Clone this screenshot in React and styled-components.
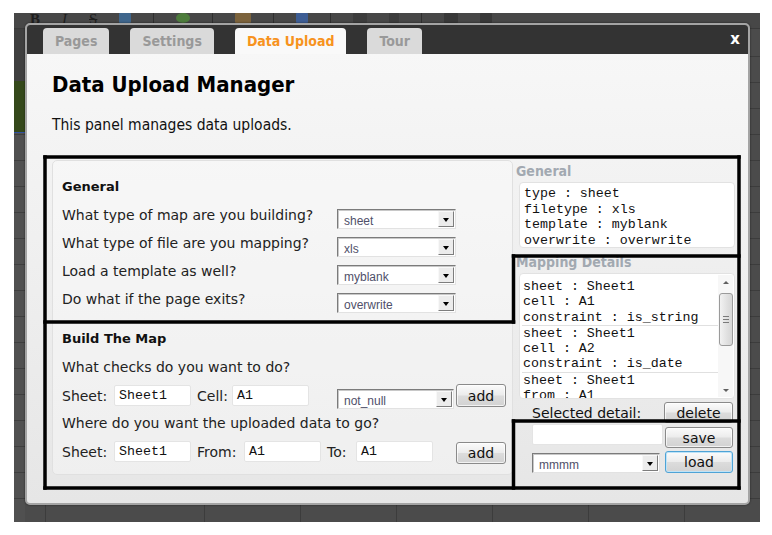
import React from 'react';
import styled, { createGlobalStyle } from 'styled-components';

const GlobalStyle = createGlobalStyle`
  html, body { margin: 0; padding: 0; background: #ffffff; }
  body { font-family: "DejaVu Sans", Verdana, sans-serif; }
  * { box-sizing: border-box; }
`;

const Page = styled.div`
  position: relative;
  width: 772px;
  height: 535px;
  overflow: hidden;
  background: #ffffff;
  padding: 13px 12px 13px 14px;
`;

const Backdrop = styled.div`
  width: 746px;
  height: 509px;
  display: flex;
  flex-direction: column;
  background-color: #4b4b4b;
`;

const Toolbar = styled.div`
  height: 16px;
  flex: none;
  display: flex;
  align-items: flex-start;
  gap: 22px;
  padding: 0 0 0 16px;
  background: #474747;
  border-bottom: 1px solid #3a3a3a;
`;

const ToolGlyph = styled.span`
  font-family: "Liberation Serif", serif;
  font-size: 15px;
  line-height: 13px;
  color: #1e1e1e;
  font-weight: ${p => (p.$bold ? 700 : 400)};
  font-style: ${p => (p.$italic ? 'italic' : 'normal')};
  text-decoration: ${p => (p.$strike ? 'line-through' : 'none')};
`;

const ToolIcon = styled.span`
  width: ${p => p.$w || 12}px;
  height: 10px;
  border-radius: ${p => (p.$round ? '50%' : '1px')};
  background: ${p => p.$c};
  opacity: 0.8;
`;

const ToolSep = styled.span`
  width: 1px;
  height: 10px;
  background: #2f2f2f;
`;

const Sheet = styled.div`
  flex: 1;
  display: flex;
`;

const RowHeader = styled.div`
  width: 11px;
  display: flex;
  flex-direction: column;
  background-color: #505050;
  background-image: repeating-linear-gradient(to bottom, transparent 0 25px, #3e3e3e 25px 26px);
  background-position: 0 2px;
`;

const HeaderTop = styled.div`
  height: 52px;
  background: #3f3f3f;
`;

const GreenCell = styled.div`
  height: 52px;
  background: #34481a;
  border-bottom: 1px solid #3050a0;
`;

const Grid = styled.div`
  flex: 1;
  background-color: #4b4b4b;
  background-image:
    repeating-linear-gradient(to bottom, transparent 0 25px, #3c3c3c 25px 26px),
    repeating-linear-gradient(to right, transparent 0 95px, #3c3c3c 95px 96px);
  background-position: 0 2px, 84px 0;
`;

const Modal = styled.div`
  position: absolute;
  left: 25px;
  top: 23px;
  width: 725px;
  height: 482px;
  border: 2px solid #a4a4a4;
  border-radius: 5px;
  overflow: hidden;
  display: flex;
  flex-direction: column;
  background: linear-gradient(#f8f8f8, #e6e6e6);
  box-shadow: 0 0 2px rgba(0, 0, 0, 0.6);
`;

const Header = styled.div`
  height: 29px;
  flex: none;
  display: flex;
  align-items: flex-end;
  gap: 21px;
  padding-left: 16px;
  background: #333333;
`;

const Tab = styled.div`
  height: 26px;
  padding: 0 12px;
  border-radius: 4px 4px 0 0;
  background: ${p => (p.$active ? '#f9f9f9' : '#dadada')};
  color: ${p => (p.$active ? '#f7931e' : '#999999')};
  font-family: "DejaVu Sans Condensed", "DejaVu Sans", sans-serif;
  font-stretch: condensed;
  font-weight: 700;
  font-size: 14px;
  line-height: 27px;
`;

const Close = styled.div`
  margin-left: auto;
  margin-right: 8px;
  align-self: center;
  color: #ffffff;
  font-family: "DejaVu Sans", sans-serif;
  font-weight: 700;
  font-size: 15px;
  line-height: 16px;
  padding-bottom: 2px;
`;

const Body = styled.div`
  flex: 1;
  padding: 0 13px 0 25px;
  display: flex;
  flex-direction: column;
`;

const Title = styled.h1`
  margin: 18px 0 0;
  font-family: "DejaVu Sans Condensed", "DejaVu Sans", sans-serif;
  font-stretch: condensed;
  font-weight: 700;
  font-size: 22px;
  line-height: 26px;
  color: #000000;
`;

const Intro = styled.p`
  margin: 17px 0 0;
  font-family: "DejaVu Sans Condensed", "DejaVu Sans", sans-serif;
  font-stretch: condensed;
  font-size: 15.5px;
  line-height: 20px;
  color: #111111;
`;

const Main = styled.div`
  margin-top: 25px;
  display: flex;
  gap: 3px;
`;

const Panel = styled.div`
  width: 461px;
  height: 315px;
  padding: 18px 6px 0 9px;
  background: rgba(255, 255, 255, 0.35);
  border: 1px solid #e0e0e0;
  border-radius: 5px;
`;

const SectionTitle = styled.div`
  font-weight: 700;
  font-size: 13px;
  line-height: 16px;
  color: #111111;
  margin-top: ${p => p.$mt || 0}px;
`;

const QuestionRow = styled.div`
  display: flex;
  align-items: flex-start;
  height: 28px;
  margin-top: ${p => p.$mt || 0}px;
`;

const Label = styled.span`
  flex: none;
  width: ${p => (p.$w ? `${p.$w}px` : 'auto')};
  margin-top: ${p => p.$mt || 0}px;
  font-size: 14px;
  line-height: 18px;
  color: #222222;
  white-space: nowrap;
`;

const Question = styled.div`
  font-size: 14px;
  line-height: 18px;
  color: #222222;
  margin-top: ${p => p.$mt || 0}px;
`;

const FieldRow = styled.div`
  display: flex;
  align-items: flex-start;
  margin-top: ${p => p.$mt || 0}px;
  height: 23px;
`;

const SelectBox = styled.div`
  flex: none;
  display: flex;
  width: ${p => p.$w}px;
  height: ${p => p.$h || 20}px;
  margin-top: ${p => p.$mt || 0}px;
  margin-left: ${p => p.$ml || 0}px;
  background: #ffffff;
  border-style: solid;
  border-width: 1px;
  border-color: #7b7b7b #e2e2e2 #e2e2e2 #7b7b7b;
  box-shadow: inset 1px 1px 0 #c8c8c8;
  padding: 1px 1px 1px 0;
`;

const SelectValue = styled.span`
  flex: 1;
  padding: 2px 0 0 6px;
  font-family: "Liberation Sans", Arial, sans-serif;
  font-size: 12px;
  line-height: 16px;
  color: #50506a;
`;

const SelectArrow = styled.span`
  flex: none;
  width: 16px;
  display: flex;
  align-items: center;
  justify-content: center;
  background: #ececec;
  border-style: solid;
  border-width: 1px;
  border-color: #f8f8f8 #7d7d7d #7d7d7d #f8f8f8;
  &::after {
    content: '';
    border-left: 3.5px solid transparent;
    border-right: 3.5px solid transparent;
    border-top: 4px solid #000000;
    margin-top: 1px;
  }
`;

const TextInput = styled.div`
  flex: none;
  width: ${p => p.$w}px;
  height: 21px;
  margin-top: ${p => p.$mt || 0}px;
  margin-right: ${p => p.$mr || 0}px;
  padding-left: 4px;
  background: #ffffff;
  border: 1px solid #e4e4e4;
  border-radius: 2px;
  font-family: "Liberation Mono", "Courier New", monospace;
  font-size: 13.3px;
  line-height: 19px;
  color: #111111;
`;

const Button = styled.div`
  flex: none;
  width: ${p => p.$w}px;
  height: ${p => p.$h || 22}px;
  margin-top: ${p => p.$mt || 0}px;
  margin-left: ${p => (p.$auto ? 'auto' : `${p.$ml || 0}px`)};
  display: flex;
  align-items: center;
  justify-content: center;
  border: 1px solid ${p => (p.$focus ? '#4ea3d6' : '#8a8a8a')};
  border-radius: 3px;
  background: linear-gradient(#fbfbfb, #ececec 48%, #dcdcdc 52%, #d2d2d2);
  box-shadow: inset 0 0 0 1px ${p => (p.$focus ? '#bfe3f7' : 'rgba(255,255,255,0.7)')};
  font-size: 14px;
  line-height: 16px;
  color: #111111;
`;

const Side = styled.div`
  width: 219px;
  padding-top: 2px;
  display: flex;
  flex-direction: column;
`;

const SideTitle = styled.div`
  font-family: "DejaVu Sans Condensed", "DejaVu Sans", sans-serif;
  font-stretch: condensed;
  font-weight: 700;
  font-size: 14px;
  line-height: 18px;
  color: #a2a9b1;
  margin-top: ${p => p.$mt || 0}px;
`;

const InfoBox = styled.div`
  margin: 2px 0 0 3px;
  width: 216px;
  height: ${p => p.$h}px;
  background: #ffffff;
  border: 1px solid #e2e2e2;
  border-radius: 4px;
  padding: ${p => p.$pad || '3px 4px 1px'};
  font-family: "Liberation Mono", "Courier New", monospace;
  font-size: 13.3px;
  line-height: 15.5px;
  color: #111111;
  white-space: pre;
  overflow: hidden;
  position: relative;
`;

const ListBox = styled(InfoBox)`
  display: flex;
  padding: 0 1px 0 2px;
`;

const Entries = styled.div`
  flex: 1;
  height: 124px;
  padding-top: 5px;
  line-height: 15.3px;
  overflow: hidden;
`;

const Entry = styled.div`
  padding-left: 1px;
  border-bottom: 1px solid #e0e0e0;
`;

const Scrollbar = styled.div`
  flex: none;
  width: 15px;
  margin: 1px 0;
  display: flex;
  flex-direction: column;
  align-items: center;
  background: #f7f7f7;
`;

const ScrollArrow = styled.span`
  flex: none;
  height: 14px;
  display: flex;
  align-items: center;
  justify-content: center;
  &::after {
    content: '';
    border-left: 3px solid transparent;
    border-right: 3px solid transparent;
    ${p => (p.$down ? 'border-top: 3px solid #606060;' : 'border-bottom: 3px solid #606060;')}
  }
`;

const ScrollThumb = styled.span`
  flex: none;
  width: 14px;
  height: 53px;
  margin-top: 4px;
  display: flex;
  flex-direction: column;
  align-items: center;
  justify-content: center;
  gap: 2px;
  border: 1px solid #9a9a9a;
  border-radius: 3px;
  background: linear-gradient(to right, #f2f2f2, #e0e0e0 60%, #d6d6d6);
`;

const Grip = styled.span`
  width: 6px;
  height: 1px;
  background: #7a7a7a;
`;

const Spacer = styled.span`
  flex: 1;
`;

const ActionRow = styled.div`
  display: flex;
  align-items: flex-start;
  padding: 0 2px 0 16px;
  margin-top: ${p => p.$mt || 0}px;
`;

const ActionLabel = styled.span`
  font-size: 14px;
  line-height: 18px;
  color: #111111;
  margin-top: 3px;
`;

const Annotations = styled.svg`
  position: absolute;
  left: 0;
  top: 0;
  width: 772px;
  height: 535px;
  pointer-events: none;
`;

function Select({ value, w, mt, ml, h }) {
  return (
    <SelectBox $w={w} $mt={mt} $ml={ml} $h={h}>
      <SelectValue>{value}</SelectValue>
      <SelectArrow />
    </SelectBox>
  );
}

const questions = [
  ['What type of map are you building?', 'sheet'],
  ['What type of file are you mapping?', 'xls'],
  ['Load a template as well?', 'myblank'],
  ['Do what if the page exits?', 'overwrite'],
];

const entries = [
  ['sheet : Sheet1', 'cell : A1', 'constraint : is_string'],
  ['sheet : Sheet1', 'cell : A2', 'constraint : is_date'],
  ['sheet : Sheet1', 'from : A1'],
];

export default function App() {
  return (
    <>
      <GlobalStyle />
      <Page>
        <Backdrop>
          <Toolbar>
            <ToolGlyph $bold>B</ToolGlyph>
            <ToolGlyph $italic>I</ToolGlyph>
            <ToolGlyph $strike>S</ToolGlyph>
            <ToolIcon $c="#3d6e9e" $w={12} />
            <ToolSep />
            <ToolIcon $c="#4f8a3a" $w={14} $round />
            <ToolSep />
            <ToolIcon $c="#8a6a3a" $w={16} />
            <ToolSep />
            <ToolIcon $c="#3b63a8" $w={12} />
            <ToolSep />
            <ToolIcon $c="#3a3a3a" $w={14} />
            <ToolIcon $c="#3a3a3a" $w={10} />
            <ToolSep />
            <ToolIcon $c="#353535" $w={14} />
            <ToolIcon $c="#353535" $w={12} />
          </Toolbar>
          <Sheet>
            <RowHeader>
              <HeaderTop />
              <GreenCell />
            </RowHeader>
            <Grid />
          </Sheet>
        </Backdrop>

        <Modal>
          <Header>
            <Tab>Pages</Tab>
            <Tab>Settings</Tab>
            <Tab $active>Data Upload</Tab>
            <Tab>Tour</Tab>
            <Close>x</Close>
          </Header>
          <Body>
            <Title>Data Upload Manager</Title>
            <Intro>This panel manages data uploads.</Intro>
            <Main>
              <Panel>
                <SectionTitle>General</SectionTitle>
                {questions.map(([q, v], i) => (
                  <QuestionRow key={q} $mt={i === 0 ? 9 : 0}>
                    <Label $w={275} $mt={2}>{q}</Label>
                    <Select value={v} w={119} mt={5} />
                  </QuestionRow>
                ))}
                <SectionTitle $mt={15}>Build The Map</SectionTitle>
                <Question $mt={11}>What checks do you want to do?</Question>
                <FieldRow $mt={8}>
                  <Label $w={52} $mt={3}>Sheet:</Label>
                  <TextInput $w={77} $mt={1} $mr={6}>Sheet1</TextInput>
                  <Label $w={35} $mt={3}>Cell:</Label>
                  <TextInput $w={77} $mt={1}>A1</TextInput>
                  <Select value="not_null" w={117} mt={5} ml={28} />
                  <Button $w={50} $h={23} $auto>add</Button>
                </FieldRow>
                <Question $mt={7}>Where do you want the uploaded data to go?</Question>
                <FieldRow $mt={9}>
                  <Label $w={52} $mt={2}>Sheet:</Label>
                  <TextInput $w={77} $mr={6}>Sheet1</TextInput>
                  <Label $w={47} $mt={2}>From:</Label>
                  <TextInput $w={77} $mr={6}>A1</TextInput>
                  <Label $w={29} $mt={2}>To:</Label>
                  <TextInput $w={77}>A1</TextInput>
                  <Button $w={50} $mt={1} $auto>add</Button>
                </FieldRow>
              </Panel>

              <Side>
                <SideTitle>General</SideTitle>
                <InfoBox $h={66}>
                  {'type : sheet\nfiletype : xls\ntemplate : myblank\noverwrite : overwrite'}
                </InfoBox>
                <SideTitle $mt={5}>Mapping Details</SideTitle>
                <ListBox $h={126}>
                  <Entries>
                    {entries.map((e, i) => (
                      <Entry key={i}>
                        {e.map(line => (
                          <div key={line}>{line}</div>
                        ))}
                      </Entry>
                    ))}
                  </Entries>
                  <Scrollbar>
                    <ScrollArrow />
                    <ScrollThumb>
                      <Grip />
                      <Grip />
                      <Grip />
                    </ScrollThumb>
                    <Spacer />
                    <ScrollArrow $down />
                  </Scrollbar>
                </ListBox>
                <ActionRow $mt={2}>
                  <ActionLabel>Selected detail:</ActionLabel>
                  <Button $w={69} $h={21} $mt={1} $auto>delete</Button>
                </ActionRow>
                <ActionRow $mt={1}>
                  <TextInput $w={131} />
                  <Button $w={68} $h={21} $mt={3} $auto>save</Button>
                </ActionRow>
                <ActionRow $mt={3}>
                  <Select value="mmmm" w={128} mt={2} />
                  <Button $w={68} $h={22} $auto $focus>load</Button>
                </ActionRow>
              </Side>
            </Main>
          </Body>
        </Modal>

        <Annotations viewBox="0 0 772 535">
          <g stroke="#000000" strokeWidth="3.5" fill="none" strokeLinecap="square">
            <line x1="45" y1="157" x2="739" y2="157" />
            <line x1="45" y1="157" x2="45" y2="488" />
            <line x1="739" y1="157" x2="739" y2="488" />
            <line x1="45" y1="488" x2="739" y2="488" />
            <line x1="45" y1="322" x2="513.5" y2="322" />
            <line x1="513.5" y1="256" x2="513.5" y2="322" />
            <line x1="513.5" y1="256" x2="739" y2="256" />
            <line x1="513.5" y1="421" x2="739" y2="421" />
            <line x1="513.5" y1="421" x2="513.5" y2="488" />
          </g>
        </Annotations>
      </Page>
    </>
  );
}
